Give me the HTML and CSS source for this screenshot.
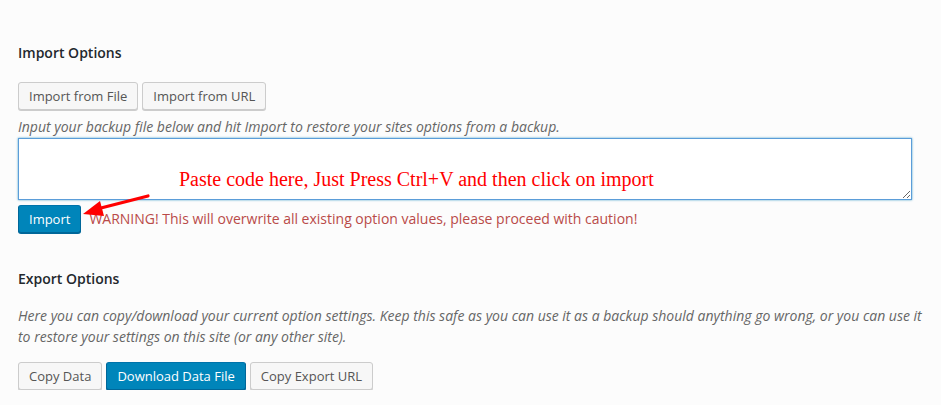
FILE: index.html
```html
<!DOCTYPE html>
<html>
<head>
<meta charset="utf-8">
<link rel="stylesheet" href="styles.css">
</head>
<body>
<div class="panel">
  <section class="section">
    <h3 class="title">Import Options</h3>
    <div class="btn-row">
      <button class="button">Import from File</button>
      <button class="button">Import from URL</button>
    </div>
    <p class="desc">Input your backup file below and hit Import to restore your sites options from a backup.</p>
    <div class="field-wrap">
      <textarea class="import-box"></textarea>
      <span class="note">Paste code here, Just Press Ctrl+V and then click on import</span>
      <svg class="arrow" width="80" height="30" viewBox="0 0 80 30">
        <line x1="67" y1="3" x2="16" y2="16" stroke="#f00" stroke-width="3.2" stroke-linecap="round"/>
        <polygon points="2,21 19,8 23,23" fill="#f00"/>
      </svg>
    </div>
    <div class="action-row">
      <button class="button primary">Import</button>
      <span class="warning">WARNING! This will overwrite all existing option values, please proceed with caution!</span>
    </div>
  </section>
  <section class="section export">
    <h3 class="title">Export Options</h3>
    <p class="desc two">Here you can copy/download your current option settings. Keep this safe as you can use it as a backup should anything go wrong, or you can use it to restore your settings on this site (or any other site).</p>
    <div class="btn-row">
      <button class="button">Copy Data</button>
      <button class="button primary">Download Data File</button>
      <button class="button">Copy Export URL</button>
    </div>
  </section>
</div>
</body>
</html>
```

FILE: styles.css
```css
html, body {
  margin: 0;
  padding: 0;
  background: #fcfcfc;
}
body {
  font-family: "Open Sans", "Liberation Sans", sans-serif;
  font-size: 13px;
  color: #444;
}
.panel {
  width: 905px;
  padding: 43px 0 0 18px;
}
.section {
  display: flex;
  flex-direction: column;
  align-items: flex-start;
}
.title {
  margin: 0;
  font-size: 14px;
  font-weight: 600;
  line-height: 20px;
  color: #23282d;
}
.btn-row {
  display: flex;
  gap: 4px;
  margin-top: 19px;
}
.button {
  font-family: "Open Sans", "Liberation Sans", sans-serif;
  font-size: 13px;
  height: 28px;
  line-height: 26px;
  padding: 0 10px 1px;
  border: 1px solid #ccc;
  border-radius: 3px;
  background: #f7f7f7;
  color: #555;
  box-shadow: 0 1px 0 #ccc;
  box-sizing: border-box;
  white-space: nowrap;
  margin: 0;
}
.button.primary {
  background: #0085ba;
  border-color: #0073aa #006799 #006799;
  box-shadow: 0 1px 0 #006799;
  color: #fff;
}
.desc {
  margin: 7px 0 0;
  font-size: 14px;
  font-style: italic;
  line-height: 20px;
  color: #666;
}
.field-wrap {
  position: relative;
  margin-top: 1px;
  width: 894px;
}
.import-box {
  display: block;
  width: 894px;
  height: 62px;
  box-sizing: border-box;
  margin: 0;
  border: 1px solid #5b9dd9;
  box-shadow: 0 0 2px rgba(30, 140, 190, 0.8);
  background: #fff;
  resize: vertical;
}
.note {
  position: absolute;
  left: 161px;
  top: 29px;
  font-family: "Liberation Serif", "Times New Roman", serif;
  font-size: 20px;
  line-height: 24px;
  color: #f00;
  white-space: nowrap;
}
.arrow {
  position: absolute;
  left: 63px;
  top: 55px;
}
.action-row {
  display: flex;
  align-items: center;
  gap: 8px;
  margin-top: 5px;
}
.warning {
  font-size: 14px;
  color: #b94a48;
  line-height: 20px;
}
.export {
  margin-top: 36px;
}
.desc.two {
  margin-top: 16px;
  line-height: 21px;
  width: 905px;
}
.export .btn-row {
  margin-top: 15px;
}
```
